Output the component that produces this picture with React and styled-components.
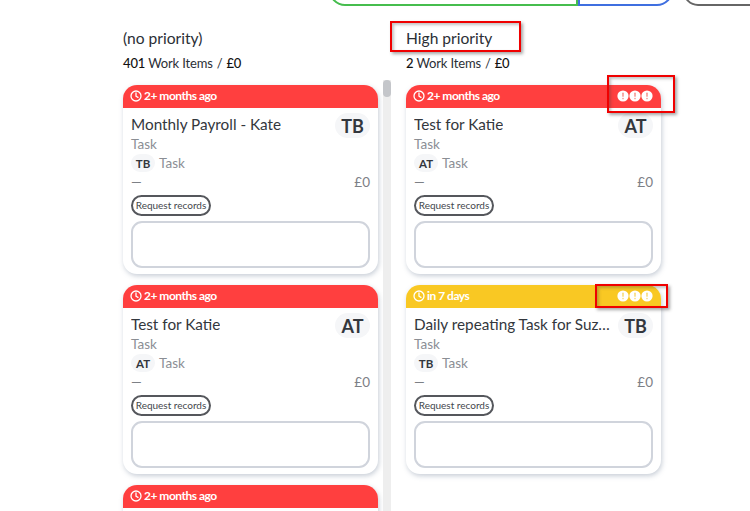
import React from "react";
import styled, { createGlobalStyle } from "styled-components";

const Global = createGlobalStyle`
  html, body { margin: 0; padding: 0; background: #fff; }
  body { font-family: Lato, "Liberation Sans", sans-serif; color: #2b2f36; }
`;

const Page = styled.div`
  position: relative;
  width: 750px;
  height: 511px;
  overflow: hidden;
  background: #fff;
`;

const TopBar = styled.div`
  display: flex;
  align-items: flex-end;
  height: 6px;
  padding-left: 329px;
  overflow: hidden;
`;

const Pill = styled.div`
  height: 30px;
  width: ${(p) => p.$w}px;
  margin-left: ${(p) => p.$ml || 0}px;
  box-sizing: border-box;
  border: 2px solid ${(p) => p.$color};
  border-radius: ${(p) => p.$radius};
  flex: none;
`;

const Board = styled.div`
  display: flex;
  padding-left: 123px;
  gap: 15px;
`;

const Column = styled.section`
  display: flex;
  flex-direction: column;
  flex: none;
`;

const ColumnTitle = styled.h2`
  margin: 22px 0 0;
  font-size: 15.6px;
  line-height: 20px;
  font-weight: 400;
  color: #2b2f36;
`;

const ColumnMeta = styled.div`
  margin-top: 7px;
  font-size: 13px;
  line-height: 16px;
  letter-spacing: -0.15px;
  color: #2b2f36;
  display: flex;
  gap: 4px;
  b { font-weight: 500; color: #111; }
`;

const ListWrap = styled.div`
  display: flex;
  margin-top: 9px;
  gap: 5px;
`;

const CardList = styled.div`
  display: flex;
  flex-direction: column;
  gap: 11px;
  padding-top: 5px;
  width: 255px;
`;

const Track = styled.div`
  width: 8px;
  height: 431px;
  background: #eeeeee;
  position: relative;
  flex: none;
`;

const Thumb = styled.div`
  position: absolute;
  top: 0;
  left: 0;
  width: 8px;
  height: 17px;
  border-radius: 4px;
  background: #c4c6ca;
`;

const Card = styled.article`
  width: 255px;
  height: 189px;
  box-sizing: border-box;
  background: #fff;
  border-radius: 14px;
  box-shadow: 1px 2px 5px rgba(110, 125, 150, 0.38);
  flex: none;
  overflow: hidden;
`;

const CardHead = styled.header`
  height: 23px;
  box-sizing: border-box;
  display: flex;
  align-items: center;
  justify-content: space-between;
  padding: 0 8px 2px 7px;
  background: ${(p) => p.$color};
  color: #fff;
  font-size: 12px;
  font-weight: 700;
  letter-spacing: -0.5px;
`;

const When = styled.span`
  display: flex;
  align-items: center;
  gap: 2px;
`;

const Alerts = styled.span`
  display: flex;
`;

const CardBody = styled.div`
  padding: 4px 8px 0;
`;

const TitleRow = styled.div`
  display: flex;
  justify-content: space-between;
  align-items: flex-start;
  height: 24px;
`;

const CardTitle = styled.div`
  margin-top: 2px;
  font-size: 15.3px;
  line-height: 20px;
  color: #33373d;
  white-space: nowrap;
  overflow: hidden;
  text-overflow: ellipsis;
  max-width: 198px;
`;

const BigAvatar = styled.div`
  margin-top: 1px;
  min-width: 35px;
  height: 25px;
  border-radius: 13px;
  background: #f5f6f8;
  display: flex;
  align-items: center;
  justify-content: center;
  font-size: 18px;
  font-weight: 700;
  color: #33373d;
  flex: none;
`;

const Muted = styled.div`
  font-size: 13.5px;
  line-height: 17px;
  color: #8b8e94;
`;

const AssignRow = styled.div`
  display: flex;
  align-items: center;
  gap: 4px;
  height: 20px;
`;

const SmallAvatar = styled.div`
  width: 24px;
  height: 18px;
  border-radius: 9px;
  background: #f5f6f8;
  display: flex;
  align-items: center;
  justify-content: center;
  font-size: 11.5px;
  font-weight: 700;
  color: #33373d;
`;

const ValueRow = styled.div`
  display: flex;
  justify-content: space-between;
  align-items: center;
  height: 18px;
  font-size: 13.5px;
  color: #7d8086;
`;

const RecordsButton = styled.div`
  margin-top: 4px;
  width: 80px;
  height: 21px;
  box-sizing: border-box;
  border: 2px solid #55575c;
  border-radius: 11px;
  padding-bottom: 1px;
  display: flex;
  align-items: center;
  justify-content: center;
  font-size: 10px;
  color: #44474c;
  white-space: nowrap;
`;

const NoteBox = styled.div`
  margin-top: 5px;
  height: 47px;
  box-sizing: border-box;
  border: 2px solid #d0d4dc;
  border-radius: 11px;
  background: #fff;
`;

const Annotation = styled.div`
  position: absolute;
  left: ${(p) => p.$x}px;
  top: ${(p) => p.$y}px;
  width: ${(p) => p.$w}px;
  height: ${(p) => p.$h}px;
  box-sizing: border-box;
  border: 2px solid #f00000;
  box-shadow: 2px 2px 3px rgba(60, 60, 60, 0.45), inset 2px 2px 3px rgba(60, 60, 60, 0.3);
`;

const Clock = () => (
  <svg width="12" height="12" viewBox="0 0 12 12" fill="none" stroke="#fff" strokeWidth="1.3">
    <circle cx="6" cy="6" r="5" />
    <path d="M6 3v3.2l2 1.2" strokeLinecap="round" />
  </svg>
);

const Alert = ({ tint }) => (
  <svg width="12" height="12" viewBox="0 0 12 12">
    <circle cx="6" cy="6" r="5.6" fill="#fff" />
    <rect x="5.3" y="2.6" width="1.4" height="4.2" rx="0.6" fill={tint} />
    <rect x="5.3" y="7.8" width="1.4" height="1.5" rx="0.6" fill={tint} />
  </svg>
);

const RED = "#ff3f3f";
const YELLOW = "#f9c823";

const WorkCard = ({ color, when, title, who, alerts }) => (
  <Card>
    <CardHead $color={color}>
      <When>
        <Clock />
        {when}
      </When>
      {alerts && (
        <Alerts>
          <Alert tint={color === RED ? "#f58a85" : "#f7d76a"} />
          <Alert tint={color === RED ? "#f58a85" : "#f7d76a"} />
          <Alert tint={color === RED ? "#f58a85" : "#f7d76a"} />
        </Alerts>
      )}
    </CardHead>
    <CardBody>
      <TitleRow>
        <CardTitle>{title}</CardTitle>
        <BigAvatar>{who}</BigAvatar>
      </TitleRow>
      <Muted>Task</Muted>
      <AssignRow>
        <SmallAvatar>{who}</SmallAvatar>
        <Muted>Task</Muted>
      </AssignRow>
      <ValueRow>
        <span>—</span>
        <span>£0</span>
      </ValueRow>
      <RecordsButton>Request records</RecordsButton>
      <NoteBox />
    </CardBody>
  </Card>
);

export default function App() {
  return (
    <Page>
      <Global />
      <TopBar>
        <Pill $w={249} $color="#46bd4e" $radius="0 0 0 16px" />
        <Pill $w={95} $color="#3f6fe0" $radius="0 0 16px 0" />
        <Pill $w={80} $ml={10} $color="#666666" $radius="16px 0 0 16px" />
      </TopBar>
      <Board>
        <Column>
          <ColumnTitle>(no priority)</ColumnTitle>
          <ColumnMeta>
            <span><b>401</b> Work Items</span>
            <span>/</span>
            <b>£0</b>
          </ColumnMeta>
          <ListWrap>
            <CardList>
              <WorkCard color={RED} when="2+ months ago" title="Monthly Payroll - Kate" who="TB" />
              <WorkCard color={RED} when="2+ months ago" title="Test for Katie" who="AT" />
              <WorkCard color={RED} when="2+ months ago" title="Test for Katie" who="AT" />
            </CardList>
            <Track>
              <Thumb />
            </Track>
          </ListWrap>
        </Column>
        <Column>
          <ColumnTitle>High priority</ColumnTitle>
          <ColumnMeta>
            <span><b>2</b> Work Items</span>
            <span>/</span>
            <b>£0</b>
          </ColumnMeta>
          <ListWrap>
            <CardList>
              <WorkCard color={RED} when="2+ months ago" title="Test for Katie" who="AT" alerts />
              <WorkCard color={YELLOW} when="in 7 days" title="Daily repeating Task for Suzanne" who="TB" alerts />
            </CardList>
          </ListWrap>
        </Column>
      </Board>
      <Annotation $x={390} $y={21} $w={131} $h={31} />
      <Annotation $x={607} $y={75} $w={68} $h={38} />
      <Annotation $x={595} $y={284} $w={73} $h={24} />
    </Page>
  );
}
